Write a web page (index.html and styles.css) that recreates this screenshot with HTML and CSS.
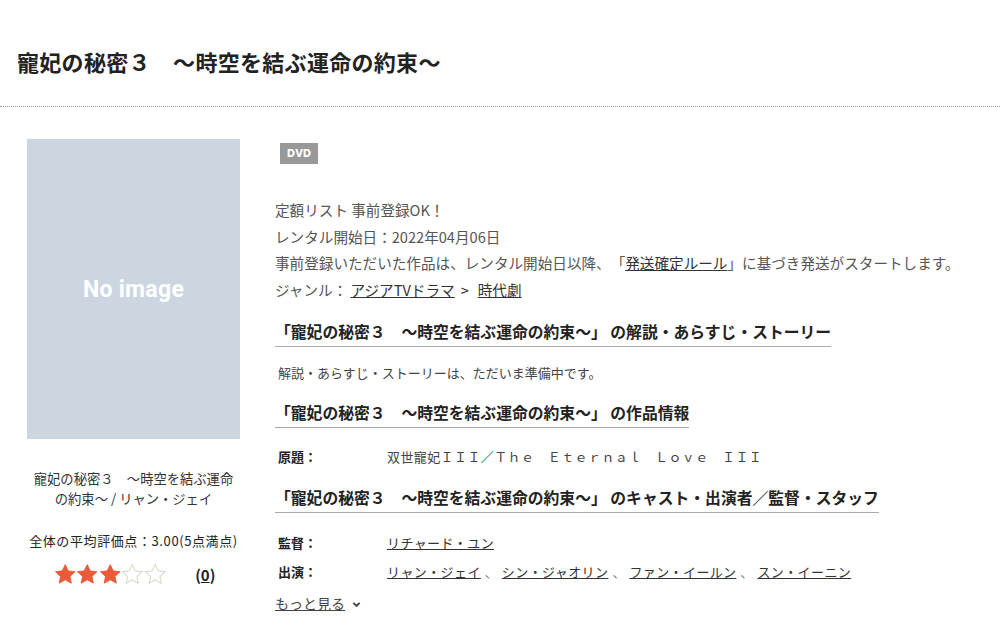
FILE: index.html
```html
<!DOCTYPE html>
<html lang="ja">
<head>
    <meta charset="UTF-8">
    <title>寵妃の秘密３　～時空を結ぶ運命の約束～</title>
    <link rel="stylesheet" href="styles.css">
</head>
<body>

    <!-- Title -->
    <div class="page-head">
        <h1 class="page-title">寵妃の秘密３　～時空を結ぶ運命の約束～</h1>
    </div>

    <div class="detail">
        <!-- Left: jacket and rating -->
        <div class="detail-side">
            <div class="jacket">No image</div>
            <p class="jacket-caption">寵妃の秘密３　～時空を結ぶ運命の約束～ / リャン・ジェイ</p>
            <p class="rating-text">全体の平均評価点：3.00(5点満点)</p>
            <div class="rating-row">
                <span class="stars">
                    <svg class="star" viewBox="0 0 22 22"><path class="star-on" d="M11 1.6l2.9 6.1 6.6.8-4.9 4.6 1.3 6.6L11 16.4l-5.9 3.3 1.3-6.6-4.9-4.6 6.6-.8z"/></svg>
                    <svg class="star" viewBox="0 0 22 22"><path class="star-on" d="M11 1.6l2.9 6.1 6.6.8-4.9 4.6 1.3 6.6L11 16.4l-5.9 3.3 1.3-6.6-4.9-4.6 6.6-.8z"/></svg>
                    <svg class="star" viewBox="0 0 22 22"><path class="star-on" d="M11 1.6l2.9 6.1 6.6.8-4.9 4.6 1.3 6.6L11 16.4l-5.9 3.3 1.3-6.6-4.9-4.6 6.6-.8z"/></svg>
                    <svg class="star" viewBox="0 0 22 22"><path class="star-off" d="M11 1.6l2.9 6.1 6.6.8-4.9 4.6 1.3 6.6L11 16.4l-5.9 3.3 1.3-6.6-4.9-4.6 6.6-.8z"/></svg>
                    <svg class="star" viewBox="0 0 22 22"><path class="star-off" d="M11 1.6l2.9 6.1 6.6.8-4.9 4.6 1.3 6.6L11 16.4l-5.9 3.3 1.3-6.6-4.9-4.6 6.6-.8z"/></svg>
                </span>
                <a class="review-count" href="#">(<u>0</u>)</a>
            </div>
        </div>

        <!-- Right: info -->
        <div class="detail-main">
            <span class="badge">DVD</span>

            <div class="info-lines">
                <p>定額リスト 事前登録OK！</p>
                <p>レンタル開始日：2022年04月06日</p>
                <p>事前登録いただいた作品は、レンタル開始日以降、「<a href="#">発送確定ルール</a>」に基づき発送がスタートします。</p>
                <p>ジャンル： <a href="#">アジアTVドラマ</a><span class="crumb">&gt;</span><a href="#">時代劇</a></p>
            </div>

            <h2 class="section-title">「寵妃の秘密３　～時空を結ぶ運命の約束～」 の解説・あらすじ・ストーリー</h2>
            <p class="story">解説・あらすじ・ストーリーは、ただいま準備中です。</p>

            <h2 class="section-title">「寵妃の秘密３　～時空を結ぶ運命の約束～」 の作品情報</h2>
            <table class="spec">
                <tr>
                    <th>原題：</th>
                    <td class="orig">双世寵妃ＩＩＩ／Ｔｈｅ　Ｅｔｅｒｎａｌ　Ｌｏｖｅ　ＩＩＩ</td>
                </tr>
            </table>

            <h2 class="section-title">「寵妃の秘密３　～時空を結ぶ運命の約束～」 のキャスト・出演者／監督・スタッフ</h2>
            <table class="spec cast">
                <tr>
                    <th>監督：</th>
                    <td><a href="#">リチャード・ユン</a></td>
                </tr>
                <tr>
                    <th>出演：</th>
                    <td><a href="#">リャン・ジェイ</a><span class="sep">、</span><a href="#">シン・ジャオリン</a><span class="sep">、</span><a href="#">ファン・イールン</a><span class="sep">、</span><a href="#">スン・イーニン</a></td>
                </tr>
            </table>

            <a class="more" href="#">もっと見る</a>
            <svg class="more-icon" viewBox="0 0 10 10"><path d="M1.5 3.2l3.5 3.3 3.5-3.3" /></svg>
        </div>
    </div>

</body>
</html>
```

FILE: styles.css
```css
body {
    margin: 0;
    font-family: "Noto Sans CJK JP", "Noto Sans", sans-serif;
    color: #555;
    background: #fff;
    text-spacing-trim: space-all;
}

p {
    margin: 0;
}

a {
    color: #333;
}

/* Title */
.page-head {
    padding: 47px 17px 31px;
    border-bottom: 1px dotted #999;
}

.page-title {
    margin: 0;
    font-size: 22px;
    line-height: 28px;
    letter-spacing: 0.3px;
    font-weight: bold;
    color: #222;
}

/* Layout */
.detail {
    display: flex;
    padding-top: 32px;
}

.detail-side {
    width: 213px;
    margin-left: 27px;
    text-align: center;
}

.detail-main {
    margin-left: 35px;
    flex: 1;
}

/* Left column */
.jacket {
    height: 300px;
    background: #cbd6e1;
    color: #fff;
    font-family: Roboto, "Open Sans", sans-serif;
    font-weight: bold;
    font-size: 23px;
    letter-spacing: 0.3px;
    display: flex;
    justify-content: center;
    align-items: center;
}

.jacket-caption {
    margin-top: 30px;
    padding: 0 6px;
    font-size: 13.3px;
    line-height: 20px;
    color: #333;
}

.rating-text {
    margin-top: 22px;
    font-size: 13px;
    line-height: 20px;
    letter-spacing: 0.6px;
    color: #222;
    white-space: nowrap;
}

.rating-row {
    margin-top: 12px;
    display: flex;
    justify-content: center;
    align-items: center;
    gap: 29px;
    padding-left: 2px;
}

.stars {
    display: flex;
}

.star {
    width: 22.5px;
    height: 22.5px;
}

.star-on {
    fill: #ec5b38;
    stroke: #e35030;
    stroke-width: 0.8;
}

.star-off {
    fill: #fff;
    stroke: #d9d5c9;
    stroke-width: 1;
}

.review-count {
    font-size: 15px;
    font-weight: bold;
    color: #222;
    text-decoration: none;
}

/* Right column */
.badge {
    display: inline-block;
    margin: 4px 0 0 5px;
    width: 38px;
    height: 21px;
    line-height: 21px;
    background: #999;
    color: #fff;
    font-family: "DejaVu Sans", sans-serif;
    font-size: 10px;
    font-weight: bold;
    text-align: center;
    vertical-align: top;
}

.info-lines {
    margin-top: 33px;
    font-size: 14.6px;
    line-height: 26.7px;
    color: #555;
}

.crumb {
    margin: 0 9px 0 6px;
    color: #333;
}

.section-title {
    display: inline-block;
    margin: 17px 0 0;
    padding: 0 0 3px;
    font-size: 15.8px;
    line-height: 22px;
    font-weight: bold;
    color: #222;
    border-bottom: 1px solid #aaa;
}

.story {
    margin: 16px 0 0 3px;
    font-size: 13px;
    line-height: 20px;
    color: #444;
}

.story + .section-title {
    margin-top: 19px;
}

.spec {
    border-collapse: collapse;
    margin: 19px 0 0 3px;
    font-size: 13px;
}

.spec th {
    width: 109px;
    padding: 0;
    text-align: left;
    font-weight: bold;
    color: #222;
    height: 20px;
    line-height: 20px;
}

.spec td {
    padding: 0;
    line-height: 20px;
    color: #444;
}

.orig {
    letter-spacing: 0.4px;
}

.spec + .section-title {
    margin-top: 20px;
}

.cast {
    margin-top: 20px;
}

.cast tr + tr th,
.cast tr + tr td {
    padding-top: 9px;
}

.cast td a {
    color: #333;
    letter-spacing: 0.4px;
}

.sep {
    color: #777;
    margin: 0 4px 0 4px;
}

.more {
    display: inline-block;
    margin-top: 11px;
    font-size: 14px;
    line-height: 20px;
    color: #444;
}

.more-icon {
    width: 9px;
    height: 9px;
    margin-left: 3px;
    fill: none;
    stroke: #444;
    stroke-width: 2.2;
}
```
